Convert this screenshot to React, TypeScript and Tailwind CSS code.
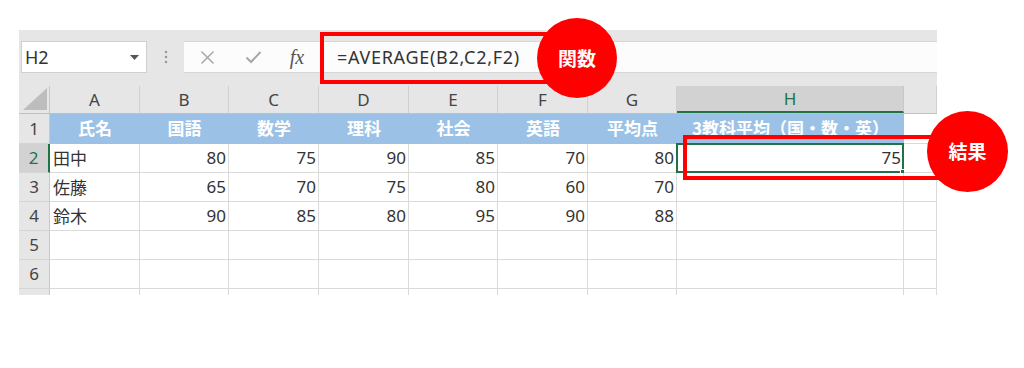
import React from "react";

const FONT = { fontFamily: '"Noto Sans CJK JP", "Noto Sans", sans-serif' };

type Col = { label: string; w: string };
const cols: Col[] = [
  { label: "A", w: "w-[90px]" },
  { label: "B", w: "w-[89px]" },
  { label: "C", w: "w-[90px]" },
  { label: "D", w: "w-[90px]" },
  { label: "E", w: "w-[89px]" },
  { label: "F", w: "w-[90px]" },
  { label: "G", w: "w-[89px]" },
  { label: "H", w: "w-[227px]" },
  { label: "", w: "w-[33px]" },
];

const header = ["氏名", "国語", "数学", "理科", "社会", "英語", "平均点", "3教科平均（国・数・英）"];
const rows: (string | number)[][] = [
  ["田中", 80, 75, 90, 85, 70, 80, 75, ""],
  ["佐藤", 65, 70, 75, 80, 60, 70, "", ""],
  ["鈴木", 90, 85, 80, 95, 90, 88, "", ""],
  ["", "", "", "", "", "", "", "", ""],
  ["", "", "", "", "", "", "", "", ""],
];

function RowHead({ n, active, h }: { n: string; active?: boolean; h: string }) {
  return (
    <div
      className={`w-[31px] ${h} shrink-0 flex items-center justify-center border-b border-[#d4d4d4] text-[17px] ${
        active ? "bg-[#d2d2d2] text-[#217346] border-r-2 border-r-[#217346]" : "bg-[#e6e6e6] text-[#444] border-r border-r-[#c8c8c8]"
      }`}
      style={{ fontFamily: '"Noto Sans", sans-serif' }}
    >
      {n}
    </div>
  );
}

export default function App() {
  return (
    <div className="relative w-[1024px] h-[368px] bg-white overflow-hidden" style={FONT}>
      <div className="ml-[19px] mt-[30px] w-[918px] bg-[#e6e6e6]">
        {/* formula row */}
        <div className="pt-[11px] flex items-stretch h-[43px]">
          <div className="ml-[2px] w-[126px] h-[32px] bg-white border border-[#d0d0d0] flex items-center justify-between pl-[3px] pr-[7px]">
            <span className="text-[18px] text-[#333]" style={{ fontFamily: '"Noto Sans", sans-serif' }}>
              H2
            </span>
            <svg width="9" height="5" viewBox="0 0 9 5">
              <polygon points="0,0 9,0 4.5,5" fill="#555" />
            </svg>
          </div>
          <div className="w-[37px] h-[32px] flex items-center justify-center">
            <svg width="4" height="14" viewBox="0 0 4 14">
              <circle cx="2" cy="2" r="1.3" fill="#9a9a9a" />
              <circle cx="2" cy="7" r="1.3" fill="#9a9a9a" />
              <circle cx="2" cy="12" r="1.3" fill="#9a9a9a" />
            </svg>
          </div>
          <div className="flex-1 h-[32px] bg-[#fcfcfc] border-y border-[#d6d6d6] flex items-center">
            <div className="w-[47px] flex justify-center">
              <svg width="15" height="15" viewBox="0 0 15 15">
                <path d="M1.5 1.5 L13.5 13.5 M13.5 1.5 L1.5 13.5" stroke="#a8a8a8" strokeWidth="1.5" />
              </svg>
            </div>
            <div className="w-[44px] flex justify-center">
              <svg width="17" height="14" viewBox="0 0 17 14">
                <path d="M1.5 7.5 L6 12 L15.5 2" stroke="#a8a8a8" strokeWidth="2" fill="none" />
              </svg>
            </div>
            <div className="w-[44px] flex justify-center">
              <span className="italic text-[20px] text-[#555]" style={{ fontFamily: '"Liberation Serif", serif' }}>
                fx
              </span>
            </div>
            <div
              className="ml-[18px] text-[18px] text-[#333] tracking-[0.7px]"
              style={{ fontFamily: '"Noto Sans", sans-serif' }}
            >
              =AVERAGE(B2,C2,F2)
            </div>
          </div>
        </div>
        <div className="h-[13px]" />

        {/* column header */}
        <div className="flex h-[28px] border-b border-[#c0c0c0]">
          <div className="w-[31px] shrink-0 border-r border-[#c8c8c8] relative">
            <svg className="absolute right-[2px] bottom-[3px]" width="24" height="22" viewBox="0 0 24 22">
              <polygon points="24,0 24,22 0,22" fill="#bdbdbd" />
            </svg>
          </div>
          {cols.map((c) => (
            <div
              key={c.label + c.w}
              className={`${c.w} shrink-0 flex items-center justify-center text-[17px] ${
                c.label === "H"
                  ? "bg-[#d2d2d2] text-[#217346] border-b-2 border-[#217346] border-r border-r-[#c8c8c8]"
                  : "text-[#444] border-r border-[#d0d0d0]"
              }`}
              style={{ fontFamily: '"Noto Sans", sans-serif' }}
            >
              {c.label}
            </div>
          ))}
        </div>

        {/* row 1 */}
        <div className="flex h-[30px]">
          <RowHead n="1" h="h-[30px]" />
          {cols.map((c, i) =>
            i < 8 ? (
              <div
                key={i}
                className={`${c.w} shrink-0 bg-[#9bc2e6] text-white font-bold text-[17px] pb-[2px] flex items-center justify-center whitespace-nowrap`}
              >
                {header[i]}
              </div>
            ) : (
              <div key={i} className={`${c.w} shrink-0 bg-white border-b border-[#dadada]`} />
            )
          )}
        </div>

        {/* data rows */}
        {rows.map((r, ri) => (
          <div key={ri} className="flex h-[29px]">
            <RowHead n={String(ri + 2)} h="h-[29px]" active={ri === 0} />
            {cols.map((c, ci) => {
              const v = r[ci];
              const isName = ci === 0;
              return (
                <div
                  key={ci}
                  className={`${c.w} shrink-0 relative bg-white border-r border-b border-[#dadada] flex items-center text-[#333] ${
                    isName ? "justify-start pl-[3px] text-[17px]" : "justify-end pr-[2px] text-[17px]"
                  }`}
                  style={isName ? undefined : { fontFamily: '"Noto Sans", sans-serif' }}
                >
                  {v}
                  {ri === 0 && ci === 7 && (
                    <div className="absolute -left-[1px] -top-[1px] -right-[1px] -bottom-[1px] border-2 border-[#217346]">
                      <div className="absolute -right-[4px] -bottom-[4px] w-[6px] h-[6px] bg-[#217346] border border-white" />
                    </div>
                  )}
                </div>
              );
            })}
          </div>
        ))}
        {/* partial row 7 */}
        <div className="flex h-[6px] overflow-hidden">
          <div className="w-[31px] shrink-0 bg-[#e6e6e6] border-r border-[#c8c8c8]" />
          {cols.map((c, ci) => (
            <div key={ci} className={`${c.w} shrink-0 bg-white border-r border-[#dadada]`} />
          ))}
        </div>
      </div>

      {/* annotation: formula box */}
      <div className="absolute left-[320px] top-[32px] w-[229px] h-[52px] border-[4px] border-[#ff0000]" />
      <div className="absolute left-[537px] top-[18px] w-[80px] h-[80px] rounded-full bg-[#ff0000] flex items-center justify-center text-white font-bold text-[19px]">
        関数
      </div>

      {/* annotation: result box */}
      <div className="absolute left-[683px] top-[135px] w-[260px] h-[45px] border-[4px] border-[#ff0000]" />
      <div className="absolute left-[927px] top-[111px] w-[81px] h-[81px] rounded-full bg-[#ff0000] flex items-center justify-center text-white font-bold text-[19px]">
        結果
      </div>
    </div>
  );
}
